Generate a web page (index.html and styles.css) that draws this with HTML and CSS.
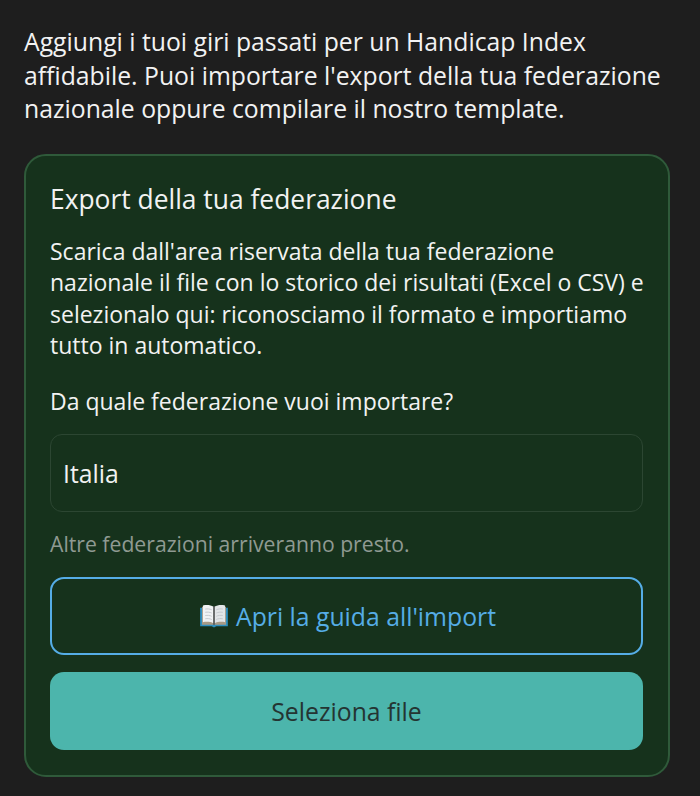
FILE: index.html
```html
<!DOCTYPE html>
<html lang="it">
<head>
    <meta charset="UTF-8">
    <meta name="viewport" content="width=device-width, initial-scale=1.0">
    <title>Importa giri</title>
    <link rel="stylesheet" href="styles.css">
</head>
<body>

    <p class="intro">Aggiungi i tuoi giri passati per un Handicap Index affidabile. Puoi importare l'export della tua federazione nazionale oppure compilare il nostro template.</p>

    <div class="card">
        <h2>Export della tua federazione</h2>

        <p class="desc">Scarica dall'area riservata della tua federazione nazionale il file con lo storico dei risultati (Excel o CSV) e selezionalo qui: riconosciamo il formato e importiamo tutto in automatico.</p>

        <p class="question">Da quale federazione vuoi importare?</p>

        <div class="select">Italia</div>

        <p class="hint">Altre federazioni arriveranno presto.</p>

        <button class="btn btn-outline">
            <svg class="book" viewBox="0 0 30 26" width="28" height="24">
                <path d="M0 4h30v20H17.500l-2.500 1.500-2.500-1.500H0z" fill="#2f8fbf"/>
                <path d="M2 3h26v19.500H2z" fill="#a89a86"/>
                <path d="M3 1.500c4-.8 8.500-.6 11.500 1.500v18c-3-1.700-7.500-2-11.500-1.300z" fill="#f0f2f4"/>
                <path d="M27 1.500c-4-.8-8.500-.6-11.500 1.500v18c3-1.700 7.500-2 11.500-1.300z" fill="#e2e5e8"/>
                <path d="M5.500 5.500c2.500-.4 5-.2 7 .8M5.500 9c2.500-.4 5-.2 7 .8M5.500 12.500c2.500-.4 5-.2 7 .8M5.500 16c2.500-.4 5-.2 7 .8M24.500 5.500c-2.500-.4-5-.2-7 .8M24.500 9c-2.500-.4-5-.2-7 .8M24.500 12.500c-2.500-.4-5-.2-7 .8M24.500 16c-2.500-.4-5-.2-7 .8" stroke="#c2c7cc" stroke-width="1" fill="none"/>
                <path d="M15 2.500v20" stroke="#3f444a" stroke-width="1.500"/>
            </svg>
            Apri la guida all'import
        </button>

        <button class="btn btn-primary">Seleziona file</button>
    </div>

</body>
</html>
```

FILE: styles.css
```css
body {
    margin: 0;
    padding: 25px 30px 20px 24px;
    background-color: #1e1e1e;
    color: #f2f2f2;
    font-family: "Open Sans", sans-serif;
}
.intro {
    margin: 0 0 28px;
    font-size: 24.750px;
    line-height: 33.500px;
}
.card {
    padding: 24px 25px 25px 24px;
    background-color: #16321c;
    border: 2px solid #2f5a3a;
    border-radius: 22px;
}
h2 {
    margin: 0 0 18px;
    font-size: 26.400px;
    line-height: 38px;
    font-weight: 400;
}
.desc {
    margin: 0 -1px 24px 0;
    font-size: 23px;
    line-height: 31.500px;
}
.question {
    margin: 0 0 17px;
    font-size: 23px;
    line-height: 31.500px;
}
.select {
    height: 76px;
    padding: 0 12px;
    display: flex;
    align-items: center;
    font-size: 24.750px;
    border: 1px solid #2c4632;
    border-radius: 12px;
}
.hint {
    margin: 16px 0 17px;
    font-size: 21.200px;
    line-height: 32px;
    color: #8f9a92;
}
.btn {
    display: flex;
    align-items: center;
    justify-content: center;
    gap: 8px;
    width: 100%;
    box-sizing: border-box;
    height: 78px;
    font-family: inherit;
    font-size: 24.750px;
    border-radius: 14px;
    cursor: pointer;
}
.btn-outline {
    margin-bottom: 17px;
    padding-left: 9px;
    background-color: transparent;
    color: #55ade6;
    border: 2px solid #55ade6;
}
.btn-primary {
    background-color: #4cb5ac;
    color: #243432;
    border: none;
}
```
